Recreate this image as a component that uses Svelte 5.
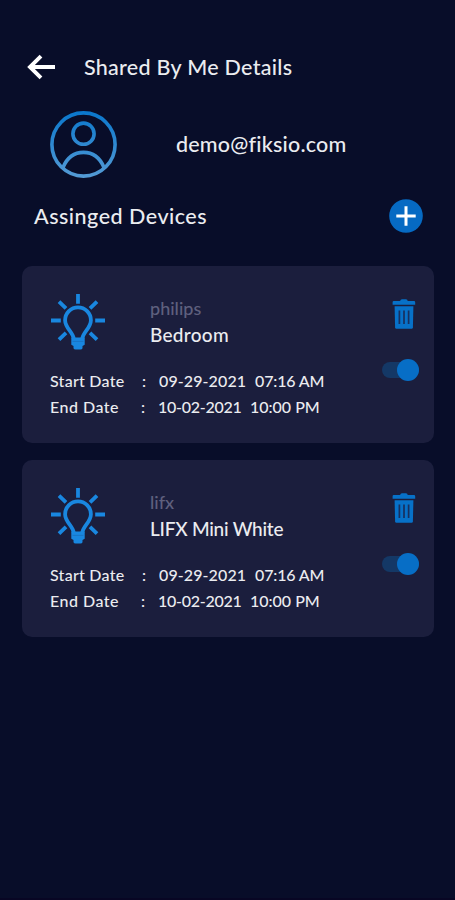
<script>
  let devices = $state([
    { id: 1, brand: "philips", name: "Bedroom", enabled: true },
    { id: 2, brand: "lifx", name: "LIFX Mini White", enabled: true }
  ]);

  const start = { date: "09-29-2021", time: "07:16 AM" };
  const end = { date: "10-02-2021", time: "10:00 PM" };

  function removeDevice(id) {
    devices = devices.filter(device => device.id !== id);
  }
</script>

<main>
  <header>
    <button class="back" aria-label="Back">
      <svg width="28" height="26" viewBox="0 0 28 26">
        <path d="M14 2.2 3 13l11 10.8M3.5 13H28" fill="none" stroke="#fff" stroke-width="3.9" />
      </svg>
    </button>
    <h1>Shared By Me Details</h1>
  </header>

  <section class="profile">
    <svg width="68" height="68" viewBox="0 0 68 68">
      <defs>
        <linearGradient id="avatar" gradientUnits="userSpaceOnUse" x1="0" y1="0" x2="0" y2="68">
          <stop offset="0" stop-color="#0876cc" />
          <stop offset="1" stop-color="#559bd5" />
        </linearGradient>
      </defs>
      <g fill="none" stroke="url(#avatar)" stroke-width="3.6">
        <circle cx="33.5" cy="34.5" r="31.6" />
        <circle cx="33.5" cy="23.7" r="10.6" />
        <path d="M13 57.5C17 48 24 42.4 33.5 42.4S50 48 54 57.5" />
      </g>
    </svg>
    <span class="email">demo@fiksio.com</span>
  </section>

  <div class="heading">
    <h2>Assinged Devices</h2>
    <button class="add" aria-label="Add device">
      <svg width="34" height="34" viewBox="0 0 34 34">
        <circle cx="17" cy="17" r="16.8" fill="#066ac3" />
        <path d="M17 7.3v19.4M7.3 17h19.4" stroke="#fff" stroke-width="3" />
      </svg>
    </button>
  </div>

  <ul>
    {#each devices as device (device.id)}
      <li>
        <div class="device">
          <svg class="bulb" width="54" height="56" viewBox="0 0 54 56">
            <g fill="none" stroke="#1987e0" stroke-width="3.8">
              <path d="M27 0v9.8M0 26.5h9.8M44.2 26.5H54M8 7.6l7 6.7M46 7.6l-7 6.7M8 45.6l7-6.7M46 45.6l-7-6.7" />
              <path d="M22.8 45c-.6-6.6-8.7-11-8.7-18.8a12.9 12.9 0 0 1 25.8 0c0 7.8-8.1 12.2-8.7 18.8" />
            </g>
            <path d="M20.3 43.5h13.4v7.3L31.500 52v2.200q-.5 1.300-2 1.300h-5q-1.500 0-2-1.300V52l-2.200-1.200z" fill="#1987e0" />
            <path d="M21.500 47.400h11" stroke="#1968b3" stroke-width=".6" />
          </svg>
          <div class="names">
            <span class="brand">{device.brand}</span>
            <span class="name" class:long={device.name.length > 10}>{device.name}</span>
          </div>
        </div>

        <div class="actions">
          <button aria-label="Delete" onclick={() => removeDevice(device.id)}>
            <svg width="24" height="30" viewBox="0 0 24 30">
              <path d="M.6 5.800V3.200Q.6 2 1.800 2h6.300Q8.500.3 10 .3h4q1.500 0 1.700 1.700H22q1.200 0 1.200 1.200v2.600z" fill="#0771c8" />
              <path d="M2.600 7.200h18.800l-.5 21.300q-.1 1.200-1.300 1.200H4.400q-1.200 0-1.300-1.200z" fill="#0771c8" />
              <path d="M7.400 11.500v13.500M12 11.500v13.500M16.600 11.500v13.500" stroke="#17305f" stroke-width="1.700" />
            </svg>
          </button>
          <button
            class="toggle"
            class:on={device.enabled}
            role="switch"
            aria-checked={device.enabled}
            aria-label="Enabled"
            onclick={() => (device.enabled = !device.enabled)}
          >
            <span class="knob"></span>
          </button>
        </div>

        <div class="dates">
          <div class="row start">
            <span class="label">Start Date</span>
            <span class="colon">:</span>
            <span class="date">{start.date}</span>
            <span class="time">{start.time}</span>
          </div>
          <div class="row end">
            <span class="label">End Date</span>
            <span class="colon">:</span>
            <span class="date">{end.date}</span>
            <span class="time">{end.time}</span>
          </div>
        </div>
      </li>
    {/each}
  </ul>
</main>

<style>
  :global(body) {
    background: #080d29;
  }

  main {
    box-sizing: border-box;
    min-height: 900px;
    padding: 47px 21px 0 22px;
    border-bottom: 2px solid #080624;
    background: #080d29;
    color: #ebecf0;
    font-family: Lato, "Open Sans", sans-serif;
    font-weight: 500;
    white-space: nowrap;
  }

  button {
    display: block;
    padding: 0;
    border: 0;
    background: none;
    cursor: pointer;
  }

  svg {
    display: block;
  }

  h1,
  h2 {
    margin: 0;
    font-weight: 500;
    line-height: 40px;
  }

  header {
    display: flex;
    align-items: center;
    height: 40px;
    padding-left: 5px;
  }

  h1 {
    margin-left: 29px;
    font-size: 21.5px;
    letter-spacing: 0.28px;
  }

  .profile {
    display: flex;
    align-items: center;
    height: 68px;
    margin-top: 23px;
    padding-left: 28px;
  }

  .email {
    margin-left: 58px;
    font-size: 21.5px;
    letter-spacing: 0.2px;
  }

  .heading {
    display: flex;
    align-items: center;
    justify-content: space-between;
    height: 40px;
    margin-top: 18px;
    padding: 0 11px 0 12px;
  }

  h2 {
    font-size: 21.5px;
    letter-spacing: 0.5px;
  }

  ul {
    display: grid;
    gap: 17px;
    margin: 30px 0 0;
    padding: 0;
    list-style: none;
  }

  li {
    display: grid;
    grid-template-columns: 1fr auto;
    grid-template-rows: 74px auto;
    align-content: start;
    box-sizing: border-box;
    height: 177px;
    padding: 28px 15px 0 28px;
    border-radius: 10px;
    background: #1b1e3d;
  }

  .device {
    display: flex;
  }

  .bulb {
    margin-left: 1px;
  }

  .names {
    display: flex;
    flex-direction: column;
    margin-left: 45px;
  }

  .brand {
    color: #5f607e;
    font-size: 18px;
    line-height: 28px;
  }

  .name {
    font-size: 19px;
    line-height: 26px;
    letter-spacing: 0.3px;
  }

  .name.long {
    letter-spacing: -0.25px;
  }

  .actions {
    display: flex;
    flex-direction: column;
    align-items: flex-end;
    gap: 33px;
    padding-top: 5px;
  }

  .actions button:first-child {
    margin-right: 3px;
  }

  .toggle {
    display: flex;
    flex: none;
    align-items: center;
    width: 37px;
    height: 16px;
    border-radius: 8px;
    background: #143866;
  }

  .toggle.on {
    justify-content: flex-end;
  }

  .knob {
    flex: none;
    width: 22px;
    height: 22px;
    border-radius: 50%;
    background: #076ec6;
  }

  .dates {
    grid-column: 1 / -1;
    font-size: 16px;
    line-height: 26px;
  }

  .row {
    display: flex;
    height: 26px;
  }

  .label {
    width: 92px;
    letter-spacing: 0.25px;
  }

  .colon {
    width: 17px;
  }

  .date {
    width: 96px;
    letter-spacing: 0.1px;
  }

  .time {
    letter-spacing: -0.15px;
  }

  .end .label {
    width: 91px;
    letter-spacing: 0.5px;
  }

  .end .date {
    width: 92px;
    letter-spacing: -0.25px;
  }

  .end .time {
    letter-spacing: 0;
  }
</style>
